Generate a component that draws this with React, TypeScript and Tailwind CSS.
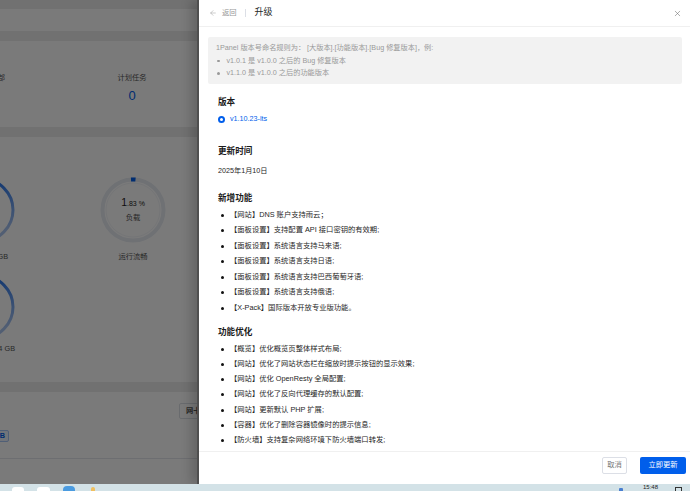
import { ArrowLeft, X } from "lucide-react";

const newFeatures = [
  "【网站】DNS 账户支持雨云；",
  "【面板设置】支持配置 API 接口密钥的有效期;",
  "【面板设置】系统语言支持马来语;",
  "【面板设置】系统语言支持日语;",
  "【面板设置】系统语言支持巴西葡萄牙语;",
  "【面板设置】系统语言支持俄语;",
  "【X-Pack】国际版本开放专业版功能。",
];

const improvements = [
  "【概览】优化概览页整体样式布局;",
  "【网站】优化了网站状态栏在缩放时提示按钮的显示效果;",
  "【网站】优化 OpenResty 全局配置;",
  "【网站】优化了反向代理缓存的默认配置;",
  "【网站】更新默认 PHP 扩展;",
  "【容器】优化了删除容器镜像时的提示信息;",
  "【防火墙】支持复杂网络环境下防火墙端口转发;",
];

function Ring({ variant }: { variant: "full" | "load" }) {
  return (
    <svg width="66" height="66" viewBox="0 0 66 66">
      <defs>
        <linearGradient id={`ring-${variant}`} x1="0" y1="0" x2="0.3" y2="1">
          <stop offset="0" stopColor="#005eeb" />
          <stop offset="1" stopColor="#a9c4f1" />
        </linearGradient>
      </defs>
      {variant === "full" ? (
        <circle cx="33" cy="33" r="31" fill="none" stroke={`url(#ring-${variant})`} strokeWidth="3" />
      ) : (
        <>
          <circle cx="33" cy="33" r="30.5" fill="none" stroke="#e8ecf3" strokeWidth="4" />
          <circle cx="33" cy="33" r="27" fill="none" stroke="#f3f5f9" strokeWidth="1" />
          <path d="M31 2.5 A30.5 30.5 0 0 1 35.5 2.6" fill="none" stroke="#005eeb" strokeWidth="4" />
        </>
      )}
    </svg>
  );
}

function Backdrop() {
  return (
    <div className="flex h-full flex-col text-[#555]">
      <div className="h-[9px] shrink-0" />
      <div className="h-[22px] shrink-0 bg-white" />
      <div className="h-[10px] shrink-0" />
      <div className="flex h-[86px] shrink-0 bg-white pt-[32px]">
        <div className="-ml-[3px] w-[8px] text-right text-[7.3px] leading-[10px] whitespace-nowrap">部</div>
        <div className="ml-[97px] flex w-[60px] flex-col items-center">
          <span className="text-[7.3px] leading-[10px]">计划任务</span>
          <span className="mt-[5px] text-[13px] leading-[16px] text-[#005eeb]">0</span>
        </div>
      </div>
      <div className="h-[10px] shrink-0" />
      <div className="flex h-[245px] shrink-0 bg-white pt-[40px]">
        <div className="-ml-[51px] flex w-[66px] flex-col">
          <Ring variant="full" />
          <span className="mt-[9px] pr-[7px] text-right text-[7.3px] leading-[10px] whitespace-nowrap">
            2.91 / 7.64 GB
          </span>
          <div className="mt-[12px]">
            <Ring variant="full" />
          </div>
          <span className="mt-[4px] text-right text-[7.3px] leading-[10px] whitespace-nowrap">
            39.5 / 99.4 GB
          </span>
        </div>
        <div className="ml-[85px] flex w-[66px] flex-col items-center">
          <div className="relative">
            <Ring variant="load" />
            <div className="absolute inset-0 flex flex-col items-center justify-center pb-[2px]">
              <span className="leading-[12px] text-[#222]">
                <span className="text-[10.5px]">1</span>
                <span className="text-[7px]">.83 %</span>
              </span>
              <span className="mt-[3px] text-[7.3px] leading-[10px]">负载</span>
            </div>
          </div>
          <span className="mt-[9px] text-[7.3px] leading-[10px]">运行流畅</span>
        </div>
      </div>
      <div className="h-[10px] shrink-0" />
      <div className="flex flex-1 flex-col bg-white">
        <div className="ml-[179px] mt-[11px] flex h-[16px] w-[40px] items-center rounded-[2px] border border-[#dcdfe6] pl-[6px] text-[7.3px] font-bold">
          网卡
        </div>
        <div className="-ml-[20px] mt-[11px] flex h-[12px] w-[29px] items-center justify-end rounded-[2px] border border-[#a8c6f6] bg-[#ecf3ff] pr-[3px] text-[7.3px] font-bold text-[#005eeb] whitespace-nowrap">
          1.2 GB
        </div>
        <div className="mt-[16px] h-px bg-[#e4e7ed]" />
      </div>
    </div>
  );
}

function Bullet({ small }: { small?: boolean }) {
  return (
    <span
      className={
        small
          ? "ml-[1px] mr-[7px] h-[2.5px] w-[2.5px] shrink-0 rounded-full bg-[#999]"
          : "ml-[3px] mr-[6px] h-[3px] w-[3px] shrink-0 rounded-full bg-[#111]"
      }
    />
  );
}

function Drawer() {
  return (
    <aside className="absolute right-0 top-0 bottom-0 flex w-[493px] flex-col border-l-2 border-[#4f4f4f] bg-white shadow-[-6px_0_10px_rgba(0,0,0,0.18)]">
      <header className="flex h-[27px] shrink-0 items-center border-b border-[#f0f0f0] pl-[10px] pr-[8px]">
        <ArrowLeft size={8} strokeWidth={1.5} className="text-[#999]" />
        <span className="ml-[5px] text-[7.3px] text-[#999]">返回</span>
        <span className="ml-[8px] h-[8px] w-px bg-[#dcdfe6]" />
        <span className="ml-[9px] text-[9px] text-[#262626]">升级</span>
        <X size={9} strokeWidth={1.4} className="ml-auto text-[#666]" />
      </header>

      <div className="flex-1 overflow-hidden pl-[9px] pr-[8px]">
        <div className="mt-[10px] rounded-[2px] bg-[#f2f2f2] pb-[4.5px] pl-[8px] pt-[5px] text-[7.2px] leading-[12.5px] text-[#999]">
          <p>1Panel 版本号命名规则为： [大版本].[功能版本].[Bug 修复版本]，例:</p>
          <p className="flex items-center">
            <Bullet small />
            v1.0.1 是 v1.0.0 之后的 Bug 修复版本
          </p>
          <p className="flex items-center">
            <Bullet small />
            v1.1.0 是 v1.0.0 之后的功能版本
          </p>
        </div>

        <div className="pl-[10px] text-[#262626]">
          <h2 className="mt-[12px] text-[8.6px] font-bold leading-[12px] text-[#1a1a1a]">版本</h2>
          <div className="mt-[6px] flex h-[10px] items-center">
            <span className="h-[7px] w-[7px] rounded-full border-[2px] border-[#005eeb] bg-white" />
            <span className="ml-[5px] text-[7.2px] text-[#005eeb]">v1.10.23-lts</span>
          </div>

          <h2 className="mt-[21px] text-[8.6px] font-bold leading-[12px] text-[#1a1a1a]">更新时间</h2>
          <p className="mt-[9px] text-[7.2px] leading-[10px]">2025年1月10日</p>

          <h2 className="mt-[15.5px] text-[8.6px] font-bold leading-[12px] text-[#1a1a1a]">新增功能</h2>
          <ul className="mt-[4px]">
            {newFeatures.map((t) => (
              <li key={t} className="flex h-[15.5px] items-center text-[7.3px] whitespace-nowrap">
                <Bullet />
                {t}
              </li>
            ))}
          </ul>

          <h2 className="mt-[10px] text-[8.6px] font-bold leading-[12px] text-[#1a1a1a]">功能优化</h2>
          <ul className="mt-[3.5px]">
            {improvements.map((t) => (
              <li key={t} className="flex h-[15.25px] items-center text-[7.3px] whitespace-nowrap">
                <Bullet />
                {t}
              </li>
            ))}
          </ul>
        </div>
      </div>

      <footer className="flex h-[33px] shrink-0 items-start justify-end gap-[13px] border-t border-[#f0f0f0] pr-[4px] pt-[5px]">
        <button className="flex h-[17px] w-[25px] items-center justify-center rounded-[2px] border border-[#dcdfe6] bg-white text-[7.3px] text-[#777]">
          取消
        </button>
        <button className="flex h-[17px] w-[46px] items-center justify-center rounded-[2px] bg-[#005eeb] text-[7.3px] text-white">
          立即更新
        </button>
      </footer>
    </aside>
  );
}

function Taskbar() {
  return (
    <div className="flex h-[7px] shrink-0 items-start bg-[#d3e2e7]">
      <span className="ml-[12px] mt-[3px] h-[4px] w-[12px] rounded-t-[3px] bg-white" />
      <span className="ml-[13px] mt-[3px] h-[4px] w-[13px] rounded-t-[3px] bg-white" />
      <span className="ml-[13px] mt-[2px] h-[5px] w-[12px] rounded-t-[4px] bg-[#4a9be0]" />
      <span className="ml-[16px] mt-[3px] h-[4px] w-[4px] rounded-t-full bg-[#f0c060]" />
      <span className="ml-auto mt-[4px] h-[3px] w-[4px] rounded-t-[1px] bg-[#4a7fd0]" />
      <span className="ml-[20px] text-[6px] leading-[6px] text-[#222]">15:48</span>
      <span className="ml-[17px] mr-[8px] mt-[3px] h-[4px] w-[7px] border border-b-0 border-[#333]" />
    </div>
  );
}

export default function App() {
  return (
    <div className="flex h-[491px] w-[690px] flex-col overflow-hidden font-['Liberation_Sans','Noto_Sans_CJK_SC',sans-serif]">
      <div className="relative flex-1 overflow-hidden bg-[#ededed]">
        <Backdrop />
        <div className="absolute inset-0 bg-black/[0.52]" />
        <Drawer />
      </div>
      <Taskbar />
    </div>
  );
}
